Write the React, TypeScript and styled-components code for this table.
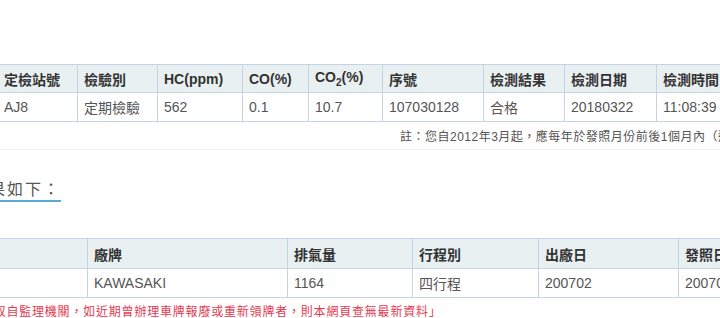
import React from "react";
import styled, { createGlobalStyle } from "styled-components";

const GlobalStyle = createGlobalStyle`
  html, body {
    margin: 0;
    padding: 0;
    overflow: hidden;
    background: #ffffff;
  }
  body {
    font-family: "Liberation Sans", Arial, "Noto Sans CJK TC", sans-serif;
  }
`;

const Page = styled.div`
  padding-top: 64px;
  width: 720px;
  overflow: hidden;
`;

const TableWrap = styled.div<{ $offset: number; $top?: number }>`
  margin-left: ${(p) => p.$offset}px;
  margin-top: ${(p) => p.$top ?? 0}px;
  white-space: nowrap;
`;

const DataTable = styled.table<{ $width: number }>`
  width: ${(p) => p.$width}px;
  border-collapse: collapse;
  table-layout: fixed;
  font-size: 14px;
`;

const HeadCell = styled.th<{ $h: number }>`
  height: ${(p) => p.$h}px;
  padding: 0 6px;
  background: #e9f0f1;
  border: 1px solid #c3d4e6;
  color: #333333;
  font-weight: bold;
  text-align: left;
  box-sizing: border-box;
  overflow: hidden;
`;

const BodyCell = styled.td`
  height: 29px;
  padding: 0 6px;
  border: 1px solid #c3d4e6;
  color: #555555;
  text-align: left;
  box-sizing: border-box;
  overflow: hidden;
`;

const Sub = styled.sub`
  font-size: 10px;
`;

const Note = styled.div`
  margin-top: 6px;
  padding-left: 400px;
  font-size: 12px;
  line-height: 18px;
  letter-spacing: 0.5px;
  color: #555555;
  white-space: nowrap;
`;

const Divider = styled.hr`
  margin: 3px 0 0;
  border: 0;
  border-top: 1px solid #f0f0f0;
  height: 0;
`;

const HeadingRow = styled.div`
  margin-top: 30px;
  margin-left: -29px;
  white-space: nowrap;
`;

const Heading = styled.span`
  display: inline-block;
  font-size: 16px;
  line-height: 20px;
  letter-spacing: 2px;
  color: #555555;
  border-bottom: 2px solid #5aaad8;
`;

const Warning = styled.div`
  margin-top: 6px;
  margin-left: -32px;
  font-size: 12px;
  line-height: 16px;
  letter-spacing: 0.8px;
  color: #e63950;
  white-space: nowrap;
`;

const inspection = {
  cols: [80, 80, 85, 66, 74, 101, 81, 92, 100],
  head: ["定檢站號", "檢驗別", "HC(ppm)", "CO(%)", "CO2", "序號", "檢測結果", "檢測日期", "檢測時間"],
  row: ["AJ8", "定期檢驗", "562", "0.1", "10.7", "107030128", "合格", "20180322", "11:08:39"],
};

const vehicle = {
  cols: [120, 200, 125, 126, 140, 100],
  head: ["", "廠牌", "排氣量", "行程別", "出廠日", "發照日"],
  row: ["", "KAWASAKI", "1164", "四行程", "200702", "200702"],
};

const sum = (a: number[]) => a.reduce((s, n) => s + n, 0);

function headLabel(h: string) {
  if (h === "CO2") {
    return (
      <>
        CO<Sub>2</Sub>(%)
      </>
    );
  }
  return h;
}

export default function App() {
  return (
    <>
      <GlobalStyle />
      <Page>
        <TableWrap $offset={-3}>
          <DataTable $width={sum(inspection.cols)}>
            <colgroup>
              {inspection.cols.map((w, i) => (
                <col key={i} style={{ width: w }} />
              ))}
            </colgroup>
            <thead>
              <tr>
                {inspection.head.map((h, i) => (
                  <HeadCell key={i} $h={28}>{headLabel(h)}</HeadCell>
                ))}
              </tr>
            </thead>
            <tbody>
              <tr>
                {inspection.row.map((c, i) => (
                  <BodyCell key={i}>{c}</BodyCell>
                ))}
              </tr>
            </tbody>
          </DataTable>
        </TableWrap>

        <Note>註：您自2012年3月起，應每年於發照月份前後1個月內（逾期未檢驗者將依規定處罰）</Note>
        <Divider />

        <HeadingRow>
          <Heading>結果如下：</Heading>
        </HeadingRow>

        <TableWrap $offset={-33} $top={36}>
          <DataTable $width={sum(vehicle.cols)}>
            <colgroup>
              {vehicle.cols.map((w, i) => (
                <col key={i} style={{ width: w }} />
              ))}
            </colgroup>
            <thead>
              <tr>
                {vehicle.head.map((h, i) => (
                  <HeadCell key={i} $h={30}>{h}</HeadCell>
                ))}
              </tr>
            </thead>
            <tbody>
              <tr>
                {vehicle.row.map((c, i) => (
                  <BodyCell key={i}>{c}</BodyCell>
                ))}
              </tr>
            </tbody>
          </DataTable>
        </TableWrap>

        <Warning>資料取自監理機關，如近期曾辦理車牌報廢或重新領牌者，則本網頁查無最新資料」</Warning>
      </Page>
    </>
  );
}
